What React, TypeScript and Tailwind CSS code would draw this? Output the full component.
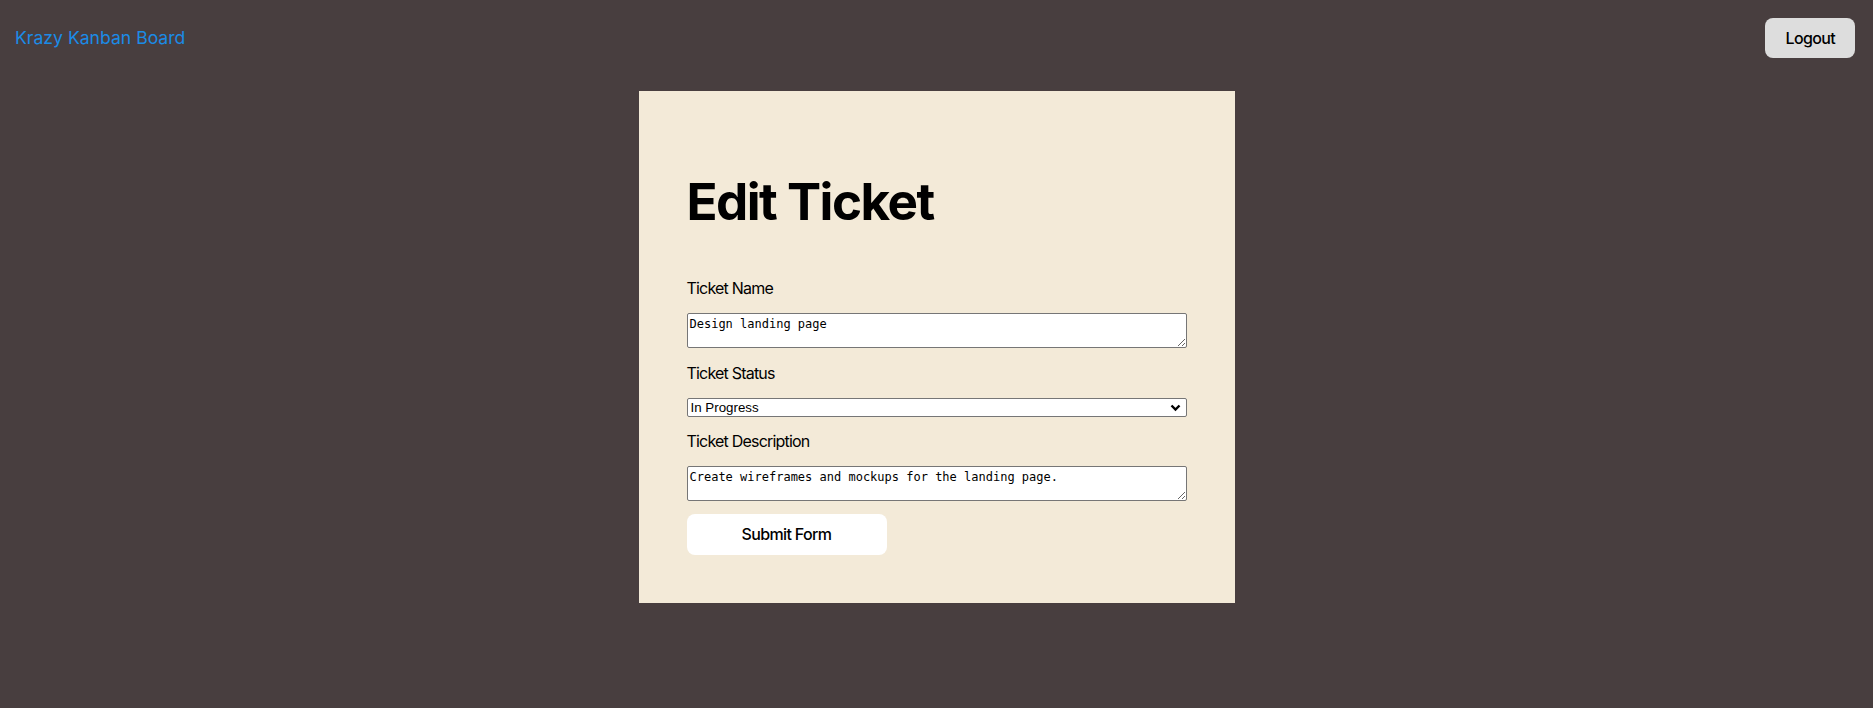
export default function App() {
    return (
        <div className="min-h-screen bg-[#483e3f] text-black font-['Inter',sans-serif]">
            <header className="flex items-center justify-between pl-[15px] pr-[18px] pt-[18px]">
                <a href="#" className="text-[17.6px] text-[#1b8be6]">Krazy Kanban Board</a>
                <button className="h-[40px] px-[20px] rounded-[8px] bg-[#dddddd] text-[16px] font-medium tracking-[-0.04em] text-black">Logout</button>
            </header>
            <main className="flex justify-center pt-[33px]">
                <div className="w-[596px] bg-[#f3ead8] px-[48px] pt-[48px] pb-[48px]">
                    <form className="flex flex-col gap-[12.8px]">
                        <h1 className="text-[51.2px] leading-[1.1] font-bold tracking-[-0.03em] my-[34px]">Edit Ticket</h1>
                        <label className="text-[16px] leading-[24px] tracking-[-0.05em]">Ticket Name</label>
                        <textarea
                            defaultValue="Design landing page"
                            className="block h-[35px] bg-white border border-[#767676] rounded-[2px] px-[2px] py-[3px] text-[12px] leading-[15px] font-['DejaVu_Sans_Mono',monospace]"
                        />
                        <label className="text-[16px] leading-[24px] tracking-[-0.05em]">Ticket Status</label>
                        <div className="relative h-[19px]">
                            <select
                                defaultValue="In Progress"
                                className="block w-full h-[19px] appearance-none bg-white border border-[#767676] rounded-[2px] pl-[3px] text-[13.33px] leading-[17px] font-['Liberation_Sans',sans-serif]"
                            >
                                <option>Todo</option>
                                <option>In Progress</option>
                                <option>Done</option>
                            </select>
                            <svg className="absolute right-[6px] top-[6px] pointer-events-none" width="11" height="8" viewBox="0 0 11 8">
                                <path d="M1.5 1.5 L5.5 5.5 L9.5 1.5" fill="none" stroke="#000" strokeWidth="2.4" />
                            </svg>
                        </div>
                        <label className="text-[16px] leading-[24px] tracking-[-0.05em]">Ticket Description</label>
                        <textarea
                            defaultValue="Create wireframes and mockups for the landing page."
                            className="block h-[35px] bg-white border border-[#767676] rounded-[2px] px-[2px] py-[3px] text-[12px] leading-[15px] font-['DejaVu_Sans_Mono',monospace]"
                        />
                        <button type="button" className="w-[200px] h-[41px] rounded-[8px] bg-white text-[16px] font-medium tracking-[-0.04em]">Submit Form</button>
                    </form>
                </div>
            </main>
        </div>
    );
}
